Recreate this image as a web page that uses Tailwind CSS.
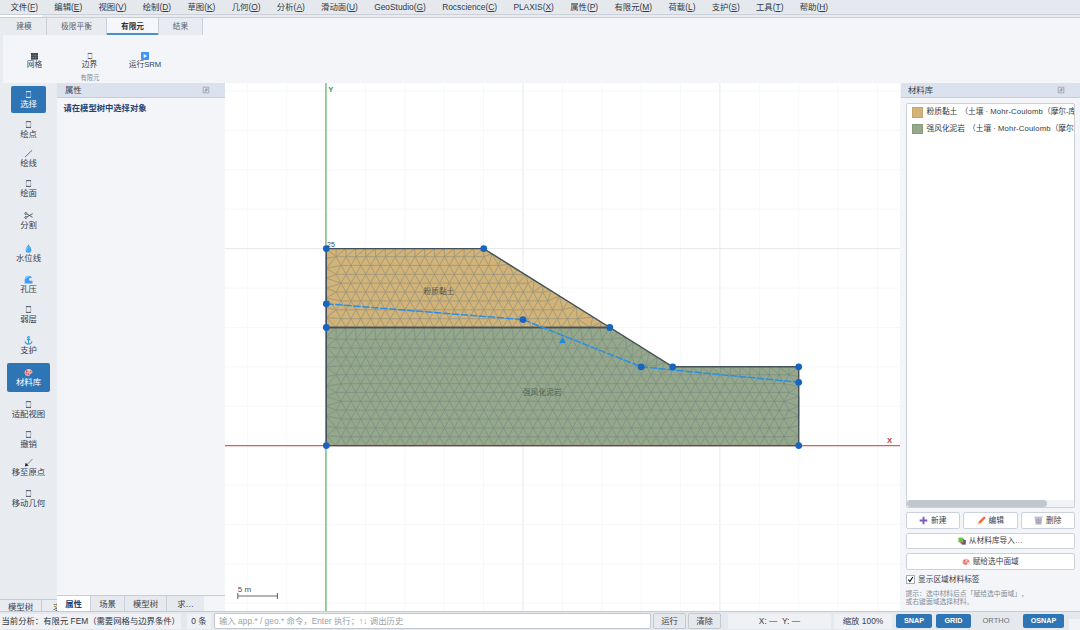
<!DOCTYPE html>
<html lang="zh-CN">
<head>
  <meta charset="UTF-8" />
  <meta name="viewport" content="width=device-width, initial-scale=1.0" />
  <title>边坡稳定分析</title>
  <script src="https://cdn.jsdelivr.net/npm/@tailwindcss/browser@4"></script>
</head>
<body class="w-[1080px] h-[630px] overflow-hidden flex flex-col bg-[#f3f5f9] text-[#3a414c] text-[8.4px] leading-[10px] whitespace-nowrap [text-spacing-trim:space-all] font-['Liberation_Sans','Noto_Sans_CJK_SC',sans-serif]">

  <!-- 图标 -->
  <svg class="hidden">
    <symbol id="i-box" viewBox="0 0 10 10"><path d="M2.3 1.8h5.4M2.3 8.2h5.4" stroke="currentColor" stroke-width="1" /><path d="M2.6 1.8v6.4M7.4 1.8v6.4" stroke="currentColor" stroke-width=".6" opacity=".6" /></symbol>
    <symbol id="i-line" viewBox="0 0 10 10"><path d="M1.2 8.8L9 1.4" stroke="currentColor" stroke-width=".8" /></symbol>
    <symbol id="i-cut" viewBox="0 0 10 10"><g fill="none" stroke="currentColor" stroke-width=".9"><path d="M3.2 3.4L9.6 7M3.2 6.6L9.6 3" /><circle cx="2" cy="2.8" r="1.1" /><circle cx="2" cy="7.2" r="1.1" /></g></symbol>
    <symbol id="i-drop" viewBox="0 0 10 10"><path d="M5 .4C6.6 3 8.2 4.8 8.2 6.6a3.2 3.2 0 0 1-6.4 0C1.8 4.8 3.4 3 5 .4z" fill="#4aa8ee" /><path d="M4.2 3.4C3.2 4.8 2.8 5.6 3 6.8" stroke="#a6d8fb" fill="none" stroke-width=".9" /></symbol>
    <symbol id="i-wave" viewBox="0 0 10 10"><path d="M.8 9.4V5C.8 2.4 2.8.8 5.2.8 7.4.8 8.8 2.2 8.8 3.8 7.8 2.8 6 3 5.6 4.4c-.4 1.6 1 2.4 3.8 2v3z" fill="#3f9bf5" /><path d="M1.6 4.4C2.2 2.4 4 1.4 6 1.8" stroke="#9fe0f8" stroke-width="1" fill="none" /></symbol>
    <symbol id="i-anchor" viewBox="0 0 10 10"><g fill="none" stroke="#3aa0dc" stroke-width="1.2"><circle cx="5" cy="1.7" r="1" /><path d="M5 2.8v6M3 4h4M1.2 5.8C1.4 8 3 9 5 9s3.6-1 3.8-3.2" /></g></symbol>
    <symbol id="i-palette" viewBox="0 0 10 10"><path d="M5 1C8 1 9.6 2.8 9.5 4.8 9.4 6.6 7.6 6 7 7c-.5 1-.6 2-2.4 2C2 9 .5 7 .5 5S2.4 1 5 1z" fill="#f3a9a0" /><circle cx="3" cy="3.4" r="1" fill="#e2445c" /><circle cx="5.6" cy="2.6" r=".8" fill="#f5f0e4" /><circle cx="2.6" cy="6" r="1" fill="#e56a54" /><circle cx="7.6" cy="4" r=".8" fill="#d83f66" /><circle cx="5" cy="7" r=".9" fill="#8a4b9a" /></symbol>
    <symbol id="i-arrow" viewBox="0 0 10 10"><path d="M9.4 1.2L3.6 7" stroke="currentColor" stroke-width=".7" /><path d="M1 9.4l.8-4.2 3.4 3.2z" fill="#20242a" /></symbol>
    <symbol id="i-float" viewBox="0 0 8 8"><path d="M1.2 1.2h5.6v5.6H1.2z" fill="#e8ebf0" stroke="#9299a4" stroke-width=".8" /><path d="M2.9 3.7h1.6v1.6H2.9zM3.8 3.5v-.8h1.5v1.6h-.6" fill="none" stroke="#6c737e" stroke-width=".5" /></symbol>
  </svg>

  <!-- 菜单栏 -->
  <div id="menu" class="shrink-0 h-[15px] flex items-center gap-[16.3px] pl-[10.5px] bg-[#e5e8ed] border-b border-[#ccd0d8] text-[#333a44]"></div>
  <div class="shrink-0 h-[3px] bg-[#e8ebf1] border-b border-[#c8ccd3]"><div class="w-[42px] h-[2px] bg-white"></div></div>

  <!-- 功能区 -->
  <div class="shrink-0 h-[65px] flex flex-col">
    <div class="flex h-[17px] w-[203px] text-[7.7px] text-[#5a626e] bg-[#e8ecf1]">
      <div class="w-[47px] pl-[2px] pt-px flex items-center justify-center border-r border-[#ccd1d9]">建模</div>
      <div class="w-[60px] pt-px flex items-center justify-center border-r border-[#ccd1d9]">极限平衡</div>
      <div class="w-[51px] flex items-center justify-center bg-[#f5f7fa] border-b-2 border-[#4a90cb] font-bold text-[#2b323c] pt-[2px]">有限元</div>
      <div class="w-[45px] pt-px flex items-center justify-center border-x border-[#ccd1d9]">结果</div>
    </div>
    <div class="flex-1 flex border-l-[3px] border-[#e8ecf1] text-[7.7px]">
      <div class="flex flex-col items-center w-[178px]">
        <div class="flex w-full pt-[17px] pl-[8px] h-[38px]">
          <div class="w-[47px] flex flex-col items-center">
            <svg class="w-[9px] h-[8px]" viewBox="0 0 9 8"><path d="M1 1h7v6.6H1z" fill="#3a3f46" /><path d="M1 3.3h7M1 5.5h7M3.3 1v6.6M5.7 1v6.6" stroke="#858a91" stroke-width=".5" /></svg>
            <span>网格</span>
          </div>
          <div class="w-[63px] flex flex-col items-center">
            <svg class="w-[8px] h-[8px]"><use href="#i-box" /></svg>
            <span>边界</span>
          </div>
          <div class="w-[48px] flex flex-col items-center">
            <svg class="w-[8px] h-[8px]" viewBox="0 0 8 8"><rect width="8" height="8" rx=".8" fill="#3f97f2" /><path d="M2.7 2l3.4 2-3.4 2z" fill="#fff" /></svg>
            <span>运行SRM</span>
          </div>
        </div>
        <span class="text-[6.3px] leading-[10px] text-[#858c97] -ml-[4px]">有限元</span>
      </div>
    </div>
  </div>

  <!-- 主体 -->
  <div class="flex-1 min-h-0 flex">
    <div class="w-[57px] shrink-0 flex flex-col bg-[#e8ecf1]">
      <div id="tools" class="flex-1 min-h-0 flex flex-col items-center pt-[1.7px]"></div>
      <div class="shrink-0 flex h-[12px] border-t border-[#c5cbd4] overflow-hidden leading-[11px]">
        <div class="w-[42px] pt-[2px] text-center border-r border-[#c5cbd4]">模型树</div>
        <div class="w-[15px] overflow-hidden pt-[2px] pl-[11px]">求</div>
      </div>
    </div>

    <div class="w-[168px] shrink-0 flex flex-col">
      <div class="h-[15px] shrink-0 flex items-center justify-between pl-[8px] pr-[15px] bg-[#dbe2ee] border-b border-[#c6cdd9]">属性<svg class="w-[8px] h-[8px]"><use href="#i-float" /></svg></div>
      <div class="flex-1 pl-[6.5px] pt-[5px] font-bold text-[8.3px] text-[#1f4373]">请在模型树中选择对象</div>
      <div class="h-[16.5px] shrink-0 flex border-t border-[#c8ced8] text-center leading-[16px]">
        <div class="w-[33px] bg-white font-bold text-[#1f4373]">属性</div>
        <div class="w-[34px] bg-[#e6e9ee] border-l border-[#ccd1d9]">场景</div>
        <div class="w-[42px] bg-[#e6e9ee] border-l border-[#ccd1d9]">模型树</div>
        <div class="w-[38px] bg-[#e6e9ee] border-l border-[#ccd1d9]">求…</div>
      </div>
    </div>

    <svg id="canvas" class="w-[675px] h-full shrink-0 bg-white" viewBox="225 83 675 528">
      <g id="grid"></g>
      <path d="M225 445.6H900" stroke="#d9605c" stroke-width="1.1" />
      <path d="M325.9 83V611" stroke="#8ecb95" stroke-width="1.8" />
      <path d="M326.3 248.6H483.7L609.8 327.5H326.3z" fill="#d2b378" />
      <path d="M326.3 327.5H609.8L672.7 366.8H798.7V445.6H326.3z" fill="#95a88b" />
      <g id="mesh" fill="none" stroke="#6a7a80" stroke-width=".45" opacity=".55"></g>
      <g fill="none" stroke="#465259" stroke-width="1.4">
        <path d="M326.3 248.6H483.7L609.8 327.5H326.3z" />
        <path d="M326.3 327.5H609.8L672.7 366.8H798.7V445.6H326.3z" />
      </g>
      <path d="M326.3 303.8L523 319.6L641.2 366.8L798.7 382.3" fill="none" stroke="#2b8fe6" stroke-width="1.5" stroke-dasharray="7.5 1.5" />
      <path d="M559 343L562.5 337.3L566 343z" fill="#1e88e5" />
      <g id="nodes" fill="#1765c0"></g>
      <g font-size="7.7">
        <text x="423.5" y="294.4" fill="#5c5444">粉质黏土</text>
        <text x="523" y="394.7" fill="#55634f">强风化泥岩</text>
        <text x="327" y="247" font-size="7" fill="#40464e">25</text>
        <text x="328.3" y="91.8" font-weight="bold" fill="#3f9c4e">Y</text>
        <text x="887" y="443" font-weight="bold" fill="#cc3a36">X</text>
        <text x="237.8" y="592.3" font-size="8" fill="#4a4f58">5 m</text>
      </g>
      <path d="M237.8 596H277.4M237.8 593V599M277.4 593V599" stroke="#666a75" stroke-width="1.1" fill="none" />
    </svg>

    <!-- 材料库 -->
    <div class="w-[180px] shrink-0 flex flex-col">
      <div class="h-[15px] ml-px shrink-0 flex items-center justify-between pl-[7px] pr-[15px] bg-[#dbe2ee] border-b border-[#c6cdd9]">材料库<svg class="w-[8px] h-[8px]"><use href="#i-float" /></svg></div>
      <div class="flex flex-col flex-1 pl-[5.5px] pr-[5px] pt-[5px] text-[7.7px]">
        <div class="h-[404.5px] flex flex-col bg-white border border-[#cbd1da] rounded-[2px] overflow-hidden">
          <div class="flex-1">
            <div class="h-[16.6px] pl-[5.5px] flex items-center gap-[4px]"><span class="w-[10.5px] h-[10.5px] shrink-0 bg-[#d2b378] border border-[#c4a56b]"></span><span class="text-[#333a44]">粉质黏土 <span class="ml-[1px]">（土壤 ·</span> <span class="tracking-[0.15px]">Mohr-Coulomb</span>（摩尔-库</span></div>
            <div class="h-[16.6px] pl-[5.5px] flex items-center gap-[4px]"><span class="w-[10.5px] h-[10.5px] shrink-0 bg-[#95a88b] border border-[#869a7c]"></span><span class="text-[#333a44]">强风化泥岩 <span class="ml-[1px]">（土壤 ·</span> <span class="tracking-[0.15px]">Mohr-Coulomb</span>（摩尔-</span></div>
          </div>
          <div class="h-[7px] shrink-0 bg-[#f0f2f6]"><div class="w-[140px] h-[7px] rounded-full bg-[#c1c7cf]"></div></div>
        </div>
        <div class="mt-[4px] flex gap-[3px] h-[17px]">
          <div class="flex-1 pt-px flex items-center justify-center gap-[3px] bg-white border border-[#ccd2dc] rounded-[2px]"><svg class="w-[9px] h-[9px]" viewBox="0 0 8 8"><path d="M4 .6v6.8M.6 4h6.8" stroke="#7a5cc0" stroke-width="1.7" /></svg>新建</div>
          <div class="flex-1 pt-px flex items-center justify-center gap-[3px] bg-white border border-[#ccd2dc] rounded-[2px]"><svg class="w-[9px] h-[9px]" viewBox="0 0 8 8"><path d="M1.2 5.2L5.4 1l1.6 1.6-4.2 4.2z" fill="#f2703c" /><path d="M5.4 1l.8-.8L7.8 1.8 7 2.6z" fill="#e04a64" /><path d="M.4 7.6l.8-2.4 1.6 1.6z" fill="#e8b88a" /></svg>编辑</div>
          <div class="flex-1 pt-px flex items-center justify-center gap-[3px] bg-white border border-[#ccd2dc] rounded-[2px]"><svg class="w-[9px] h-[9px]" viewBox="0 0 8 8"><path d="M.6 1h6.8l-.8 6.8H1.4z" fill="#c9c6d3" /><path d="M.3.9h7.4M2.5 2l.3 5M5.5 2l-.3 5M4 2v5M1 3.6h6M1.2 5.6h5.6" stroke="#9691a6" stroke-width=".5" /></svg>删除</div>
        </div>
        <div class="mt-[4px] pt-px h-[16.5px] flex items-center justify-center gap-[3px] bg-white border border-[#ccd2dc] rounded-[2px]"><svg class="w-[8px] h-[8px]" viewBox="0 0 8 8"><path d="M3.6 3h4.2v4.6H3.6z" fill="#5a4a9c" /><path d="M2.2 2h4.2v4.4H2.2z" fill="#c43f6c" /><path d="M.4.6h4.8v4.8H.4z" fill="#6cc04a" /></svg>从材料库导入…</div>
        <div class="mt-[4px] pt-px h-[16.5px] flex items-center justify-center gap-[3px] bg-white border border-[#ccd2dc] rounded-[2px]"><svg class="w-[8px] h-[8px]"><use href="#i-palette" /></svg>赋给选中面域</div>
        <div class="mt-[5px] flex items-center gap-[3.5px]"><svg class="w-[9px] h-[9px]" viewBox="0 0 9 9"><rect x=".5" y=".5" width="8" height="8" fill="#fff" stroke="#a9afb8" /><path d="M2.3 4.5l1.6 2L6.8 2" fill="none" stroke="#16191d" stroke-width="1.2" /></svg>显示区域材料标签</div>
        <div class="mt-[5px] text-[6.8px] leading-[8.6px] text-[#858c97]">提示：选中材料后点「赋给选中面域」，<br />或右键面域选择材料。</div>
      </div>
    </div>
  </div>

  <!-- 状态栏 -->
  <div class="shrink-0 h-[19px] flex items-center bg-[#e5e8ed] border-t border-[#c6cad2] text-center leading-[15px]">
    <div class="w-[181px] pl-[1.5px] text-left bg-[#eff1f5] text-[#2f3640] text-[8.35px]">当前分析：有限元 FEM（需要网格与边界条件）</div>
    <div class="w-[24px] ml-[6px] bg-[#eff1f5]">0 条</div>
    <div class="w-[437px] ml-[3px] h-[15.5px] pl-[4px] leading-[14px] text-left bg-white border border-[#c3c9d3] rounded-[2px] text-[#9b9fa6]">输入 app.* / geo.* 命令，Enter 执行；↑↓ 调出历史</div>
    <div class="w-[33px] ml-[2px] h-[15.5px] leading-[14px] border border-[#c3c9d3] rounded-[2px]">运行</div>
    <div class="w-[33px] ml-[2px] h-[15.5px] leading-[14px] border border-[#c3c9d3] rounded-[2px]">清除</div>
    <div class="w-[103px] ml-[7px] bg-[#eff1f5]">X: —&nbsp; Y: —</div>
    <div class="w-[58px] ml-[3px] bg-[#eff1f5]">缩放 100%</div>
    <div class="w-[36px] ml-[4px] h-[13.5px] leading-[14px] rounded-[2px] bg-[#2e75b6] text-white font-bold text-[7.2px]">SNAP</div>
    <div class="w-[35px] ml-[4px] h-[13.5px] leading-[14px] rounded-[2px] bg-[#2e75b6] text-white font-bold text-[7.2px]">GRID</div>
    <div class="w-[40px] ml-[5px] leading-[14px] text-[#69707c] text-[7.5px]">ORTHO</div>
    <div class="w-[41px] ml-[7px] h-[13.5px] leading-[14px] rounded-[2px] bg-[#2e75b6] text-white font-bold text-[7.2px]">OSNAP</div>
    <div class="w-[11px] h-[11px] ml-auto self-end bg-[#f1f3f7]"></div>
  </div>

  <script>
    const menus = ["文件(F)", "编辑(E)", "视图(V)", "绘制(D)", "草图(K)", "几何(O)", "分析(A)", "滑动面(U)", "GeoStudio(G)", "Rocscience(C)", "PLAXIS(X)", "属性(P)", "有限元(M)", "荷载(L)", "支护(S)", "工具(T)", "帮助(H)"];
    document.getElementById("menu").innerHTML = menus.map(m => `<span>${m.replace(/\((.)\)/, '(<u>$1</u>)')}</span>`).join("");

    // 名称, 图标, 行高
    const tools = [
      ["选择", "box", 29.7, "w-[35px] h-[27px] bg-[#2e75b6] text-white"],
      ["绘点", "box", 29.7],
      ["绘线", "line", 29.7],
      ["绘面", "box", 29.7],
      ["分割", "cut", 34.4],
      ["水位线", "drop", 31],
      ["孔压", "wave", 31.4],
      ["弱层", "box", 28],
      ["支护", "anchor", 33.6],
      ["材料库", "palette", 30.4, "w-[43px] h-[29px] bg-[#2e75b6] text-white"],
      ["适配视图", "box", 33.6],
      ["撤销", "box", 27],
      ["移至原点", "arrow", 30.4],
      ["移动几何", "box", 29.7]
    ];
    document.getElementById("tools").innerHTML = tools.map(([name, icon, h, cls]) => `
      <div class="shrink-0 flex items-center" style="height:${h}px">
        <div class="flex flex-col items-center justify-center rounded-[2px] ${cls || ""}">
          <svg class="w-[9px] h-[9px]"><use href="#i-${icon}" /></svg>
          <span class="leading-[10px]">${name}</span>
        </div>
      </div>`).join("");

    // 网格线, 每 5 格一条主线
    let g = "";
    for (let i = -2; i <= 14; i++) {
      const x = 326.1 + i * 39.38;
      g += `<path d="M${x} 83V611" stroke="${i % 5 ? "#f7f8f9" : "#e4e8ee"}" />`;
    }
    for (let j = -4; j <= 9; j++) {
      const y = 445.6 - j * 39.4;
      g += `<path d="M225 ${y}H900" stroke="${j % 5 ? "#f7f8f9" : "#e4e8ee"}" />`;
    }
    document.getElementById("grid").innerHTML = g;

    const nodes = [[326.3, 248.6], [483.7, 248.6], [326.3, 303.8], [326.3, 327.5], [523, 319.6], [609.8, 327.5], [641.2, 366.8], [672.7, 366.8], [798.7, 366.8], [798.7, 382.3], [326.3, 445.6], [798.7, 445.6]];
    document.getElementById("nodes").innerHTML = nodes.map(([x, y]) => `<circle cx="${x}" cy="${y}" r="3.4" />`).join("");

    function inside(poly, x, y) {
      let r = false;
      for (let i = 0, j = poly.length - 1; i < poly.length; j = i++) {
        const [xi, yi] = poly[i], [xj, yj] = poly[j];
        if ((yi > y) !== (yj > y) && x < (xj - xi) * (y - yi) / (yj - yi) + xi) r = !r;
      }
      return r;
    }

    function edgeDist(poly, x, y) {
      return Math.min(...poly.map(([ax, ay], i) => {
        const [bx, by] = poly[(i + 1) % poly.length];
        const dx = bx - ax, dy = by - ay;
        const t = Math.max(0, Math.min(1, ((x - ax) * dx + (y - ay) * dy) / (dx * dx + dy * dy)));
        return Math.hypot(x - ax - t * dx, y - ay - t * dy);
      }));
    }

    // Bowyer-Watson
    function delaunay(pts) {
      const n = pts.length;
      const p = [...pts, [-9000, -8000], [9000, -8100], [400, 12000]];
      const make = (a, b, c) => {
        const [ax, ay] = p[a], [bx, by] = p[b], [cx, cy] = p[c];
        const d = 2 * (ax * (by - cy) + bx * (cy - ay) + cx * (ay - by));
        const a2 = ax * ax + ay * ay, b2 = bx * bx + by * by, c2 = cx * cx + cy * cy;
        const x = (a2 * (by - cy) + b2 * (cy - ay) + c2 * (ay - by)) / d;
        const y = (a2 * (cx - bx) + b2 * (ax - cx) + c2 * (bx - ax)) / d;
        return { v: [a, b, c], x, y, r: (ax - x) ** 2 + (ay - y) ** 2 };
      };
      let tris = [make(n, n + 1, n + 2)];
      for (let i = 0; i < n; i++) {
        const [x, y] = p[i];
        const edges = new Map(), keep = [];
        for (const t of tris) {
          if ((x - t.x) ** 2 + (y - t.y) ** 2 >= t.r) { keep.push(t); continue; }
          for (let k = 0; k < 3; k++) {
            const a = t.v[k], b = t.v[(k + 1) % 3];
            const key = Math.min(a, b) + "_" + Math.max(a, b);
            edges.has(key) ? edges.delete(key) : edges.set(key, [a, b]);
          }
        }
        for (const [a, b] of edges.values()) keep.push(make(a, b, i));
        tris = keep;
      }
      return tris.filter(t => t.v.every(k => k < n)).map(t => t.v);
    }

    function mesh(poly, base) {
      const s = 9.845, h = 8.86, pts = [];
      poly.forEach(([ax, ay], i) => {
        const [bx, by] = poly[(i + 1) % poly.length];
        const m = Math.max(1, Math.round(Math.hypot(bx - ax, by - ay) / s));
        for (let k = 0; k < m; k++) pts.push([ax + (bx - ax) * k / m, ay + (by - ay) * k / m]);
      });
      for (let r = 1; r < 20; r++) {
        for (let c = 0; c < 50; c++) {
          const x = 326.3 + (c + (r % 2 ? 0.5 : 0)) * s, y = base - r * h;
          if (inside(poly, x, y) && edgeDist(poly, x, y) > 5.2) pts.push([x, y]);
        }
      }
      // 微小扰动避免共圆
      const jit = pts.map(([x, y], i) => [x + Math.sin(i * 7.3) * 0.02, y + Math.cos(i * 5.1) * 0.02]);
      return delaunay(jit).filter(t => inside(poly, (jit[t[0]][0] + jit[t[1]][0] + jit[t[2]][0]) / 3, (jit[t[0]][1] + jit[t[1]][1] + jit[t[2]][1]) / 3))
        .map(t => "M" + t.map(k => jit[k].map(v => v.toFixed(2)).join(" ")).join("L") + "z").join("");
    }

    const clay = [[326.3, 248.6], [483.7, 248.6], [609.8, 327.5], [326.3, 327.5]];
    const rock = [[326.3, 327.5], [609.8, 327.5], [672.7, 366.8], [798.7, 366.8], [798.7, 445.6], [326.3, 445.6]];
    document.getElementById("mesh").innerHTML = `<path d="${mesh(clay, 327.5)}" /><path d="${mesh(rock, 445.6)}" />`;
  </script>
</body>
</html>
